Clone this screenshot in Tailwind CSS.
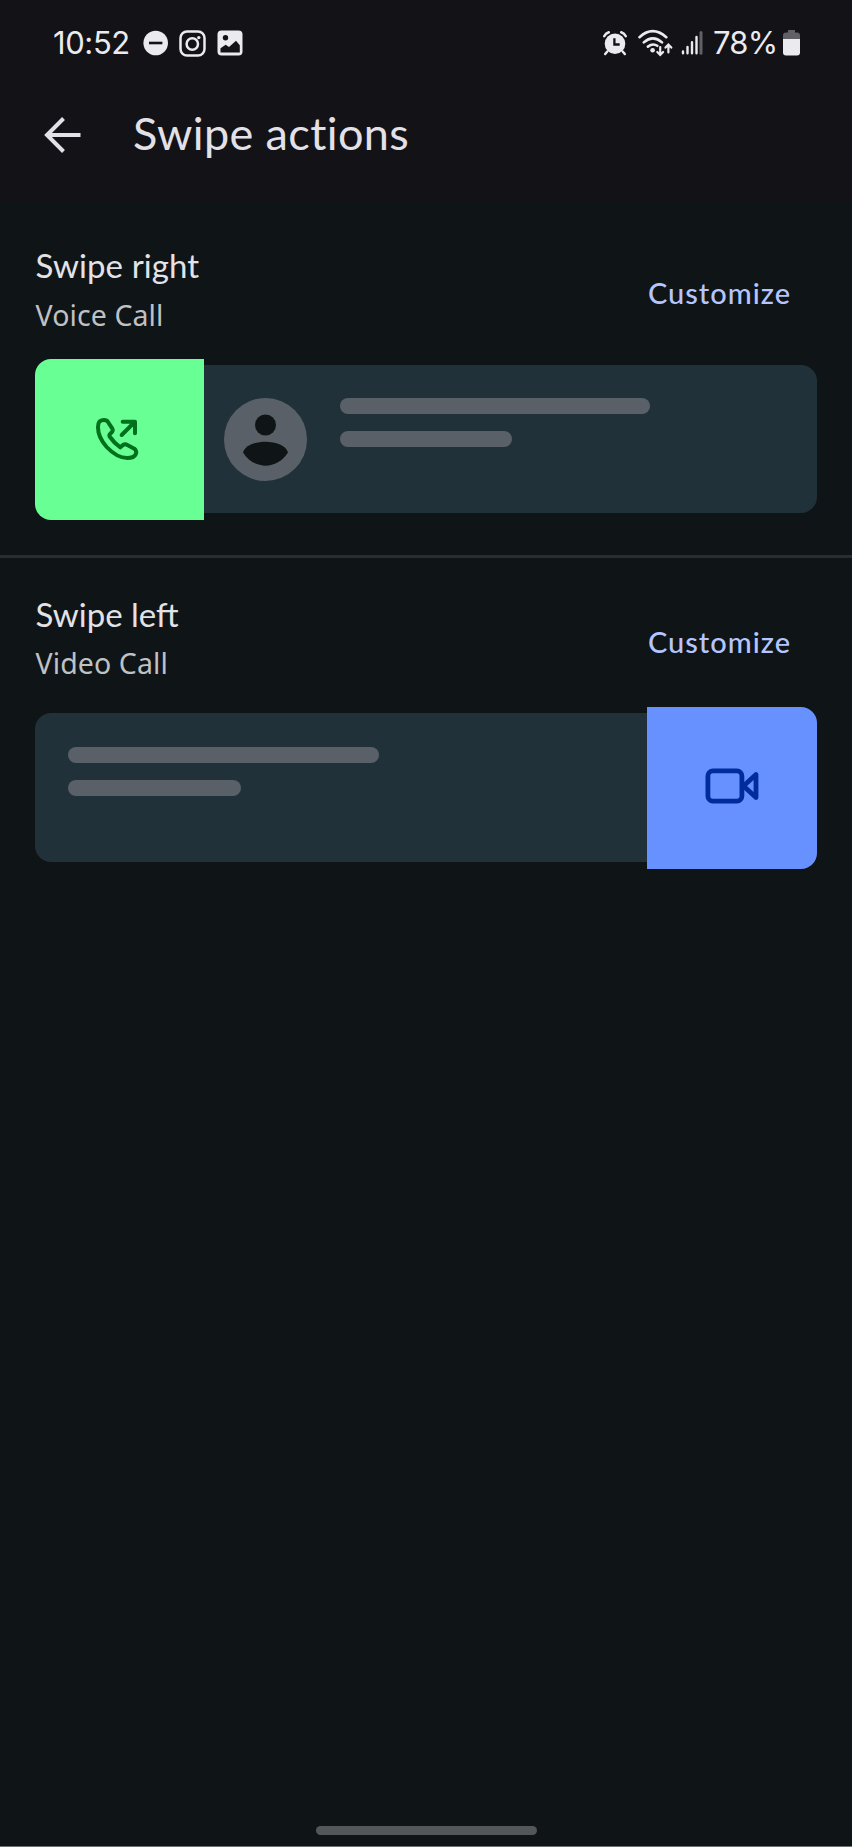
<!DOCTYPE html>
<html lang="en">
<head>
<meta charset="utf-8">
<title>Swipe actions</title>
<script src="https://cdn.jsdelivr.net/npm/@tailwindcss/browser@4"></script>
</head>
<body class="bg-[#0f1417] font-['Lato',sans-serif]">
<div class="flex h-[1847px] w-[852px] flex-col overflow-hidden border-b border-[#6e7173]">
  <div class="h-[201px] shrink-0 bg-[#121217]">
    <div class="flex h-[86px] items-center pl-[53px] pr-[52px] text-[#ebebef]">
      <span class="-mt-[2px] w-[90px] whitespace-nowrap font-['Inter',sans-serif] text-[31px] leading-none tracking-[-0.400px]">10:52</span>
      <svg class="h-[26px] w-[26px] shrink-0" viewBox="0 0 26 26"><circle cx="12.700" cy="13" r="12.300" fill="currentColor"/><path d="M6 13h13.400" stroke="#121217" stroke-width="2.600"/></svg>
      <svg class="ml-[10px] h-[27px] w-[27px] shrink-0" viewBox="0 0 27 27" fill="none" stroke="currentColor" stroke-width="2.500"><rect x="1.500" y="1.500" width="24" height="24" rx="6.500"/><circle cx="13.300" cy="14" r="5.700"/><circle cx="19.800" cy="7.600" r="1.700" fill="currentColor" stroke="none"/></svg>
      <svg class="ml-[11px] h-[26px] w-[26px] shrink-0" viewBox="0 0 26 26"><rect x=".5" y=".5" width="25" height="25" rx="4" fill="currentColor"/><circle cx="8.500" cy="7.700" r="2.700" fill="#121217"/><path d="M3.500 22.500v-4.200l5.200-3.600 3.300 2.400 7-6.400 3.800 4.600v7.200z" fill="#121217"/></svg>
      <svg class="ml-auto h-[26px] w-[26px] shrink-0" viewBox="0 0 26 26" fill="none" stroke="currentColor" stroke-width="2.500" stroke-linecap="round"><circle cx="13" cy="13.700" r="10.300" fill="currentColor" stroke="none"/><path d="M2.200 6.200Q3.600 3.400 6.800 2.300M19.200 2.300Q22.400 3.400 23.800 6.200M5.300 21.500 3.200 24M20.700 21.500 22.800 24"/><path d="M12.400 8.200v6.300h5.300" stroke="#121217" stroke-width="2.300" stroke-linecap="butt"/></svg>
      <svg class="ml-[9px] h-[28px] w-[37px] shrink-0" viewBox="0 0 37 28" fill="none" stroke="currentColor" stroke-width="2.600" stroke-linecap="round"><path d="M2.500 8.200Q15.600-3.800 29.300 8.200M6.800 13.400Q15.900 5.300 25 13.400M10.900 17.600Q15.900 13.800 20.300 16.800"/><circle cx="15.600" cy="21.200" r="2.300" fill="currentColor" stroke="none"/><path d="M23.200 18v7.500M20.300 23l2.900 3 2.900-3M31.400 23.400V16M28.500 18.600l2.900-3 2.900 3" stroke-width="2.200"/></svg>
      <svg class="ml-[7px] h-[24px] w-[22px] shrink-0" viewBox="0 0 22 24" stroke="currentColor" stroke-width="2.400" stroke-linecap="round"><path d="M2 20.500v1.800M6.500 16v6.300M11 11.200v11.100M15.500 6v16.300"/><path d="M20 1.600v20.700" stroke="#606066" stroke-width="3"/></svg>
      <span class="-mt-[2px] ml-[10px] w-[68px] whitespace-nowrap font-['Inter',sans-serif] text-[31px] leading-none tracking-[-0.800px]">78%</span>
      <svg class="ml-[2px] h-[26px] w-[17px] shrink-0" viewBox="0 0 17 26"><path d="M5 0h7v2.500h2q3 0 3 3V9H0V5.500q0-3 3-3h2z" fill="#606066"/><path d="M0 9h17v13.500q0 3-3 3H3q-3 0-3-3z" fill="currentColor"/></svg>
    </div>
    <div class="flex h-[98px] items-center pl-[44px] text-[#e3e1e8]">
      <svg class="h-[38px] w-[38px]" viewBox="0 0 38 38" fill="none" stroke="currentColor" stroke-width="4"><path d="M36.500 19H4M19.500 2.500 3 19l16.500 16.500"/></svg>
      <h1 class="-mt-[3px] ml-[51px] whitespace-nowrap text-[45px] leading-none tracking-[0.380px] [font-variant-ligatures:none]">Swipe actions</h1>
    </div>
  </div>

  <section class="h-[357px] shrink-0 border-b-3 border-[#292d31] pl-[35px] pr-[35px] pt-[44px]">
    <div class="flex h-[120px] justify-between">
      <div class="pl-[0.500px]">
        <h2 class="h-[50px] whitespace-nowrap text-[33px] leading-[40px] tracking-[0.100px] text-[#e3e3e7]">Swipe right</h2>
        <p class="whitespace-nowrap font-['Noto_Sans',sans-serif] text-[28.500px] leading-[40px] tracking-[0.100px] text-[#bfc1c4]">Voice Call</p>
      </div>
      <button class="mr-[26px] h-[96px] whitespace-nowrap text-[29px] font-medium tracking-[1px] text-[#b4c5ff]">Customize</button>
    </div>
    <div class="flex h-[148px] rounded-[16px] bg-[#21313a]">
      <div class="-ml-[0.500px] -mt-[6.500px] flex h-[161px] w-[169.500px] shrink-0 items-center justify-center rounded-l-[16px] bg-[#68ff94]">
        <svg class="-ml-[5px] -mt-[1px] h-[44px] w-[44px]" viewBox="225 213 132 132" fill="none" stroke="#00701c" stroke-width="12" stroke-linecap="round" stroke-linejoin="round"><path d="M238 227Q250 218 262 225L277 248Q280 253 276 258L269 265Q267 269 270 273Q283 292 301 304L309 297Q315 293 322 297L343 308Q352 315 347 325Q342 336 322 336Q291 336 260 303Q234 274 234 244Q234 232 238 227Z"/><path d="M305 267 344 228M308 227H345V262"/></svg>
      </div>
      <svg class="ml-[20px] mt-[32.500px] h-[83px] w-[83px] shrink-0" viewBox="0 0 83 83" fill="#0f1417"><circle cx="41.500" cy="41.500" r="41.500" fill="#5a6067"/><circle cx="41.500" cy="27" r="10.500"/><path d="M19 54.500C23 40 60 40 64 54.500C53 72 30 72 19 54.500Z"/></svg>
      <div class="ml-[33px] mt-[33px] flex flex-col gap-[17px]">
        <div class="h-[16px] w-[310px] rounded-full bg-[#5a6067]"></div>
        <div class="h-[16px] w-[172px] rounded-full bg-[#5a6067]"></div>
      </div>
    </div>
  </section>

  <section class="grow pl-[35px] pr-[35px] pt-[36px]">
    <div class="flex h-[119px] justify-between">
      <div class="pl-[0.500px]">
        <h2 class="h-[49px] whitespace-nowrap text-[33px] leading-[40px] text-[#e3e3e7]">Swipe left</h2>
        <p class="whitespace-nowrap font-['Noto_Sans',sans-serif] text-[28.500px] leading-[40px] tracking-[0.100px] text-[#bfc1c4]">Video Call</p>
      </div>
      <button class="mr-[26px] h-[95px] whitespace-nowrap text-[29px] font-medium tracking-[1px] text-[#b4c5ff]">Customize</button>
    </div>
    <div class="flex h-[149px] justify-between rounded-[16px] bg-[#21313a]">
      <div class="ml-[33px] mt-[33.500px] flex flex-col gap-[17px]">
        <div class="h-[16px] w-[311px] rounded-full bg-[#5a6067]"></div>
        <div class="h-[16px] w-[173px] rounded-full bg-[#5a6067]"></div>
      </div>
      <div class="-mt-[6.500px] mr-[0.500px] flex h-[162px] w-[170px] shrink-0 items-center justify-center rounded-r-[16px] bg-[#6691ff]">
        <svg class="-mt-[3px] h-[36px] w-[54px]" viewBox="0 0 54 36" fill="none" stroke="#002c9c" stroke-width="4.800" stroke-linejoin="round"><rect x="2.900" y="2.900" width="34" height="30.200" rx="5"/><path d="M38.500 18 51 6.500V29.500Z"/></svg>
      </div>
    </div>
  </section>

  <div class="flex h-[20px] shrink-0 justify-center">
    <div class="h-[9px] w-[221px] rounded-full bg-[#53575a]"></div>
  </div>
</div>
</body>
</html>
